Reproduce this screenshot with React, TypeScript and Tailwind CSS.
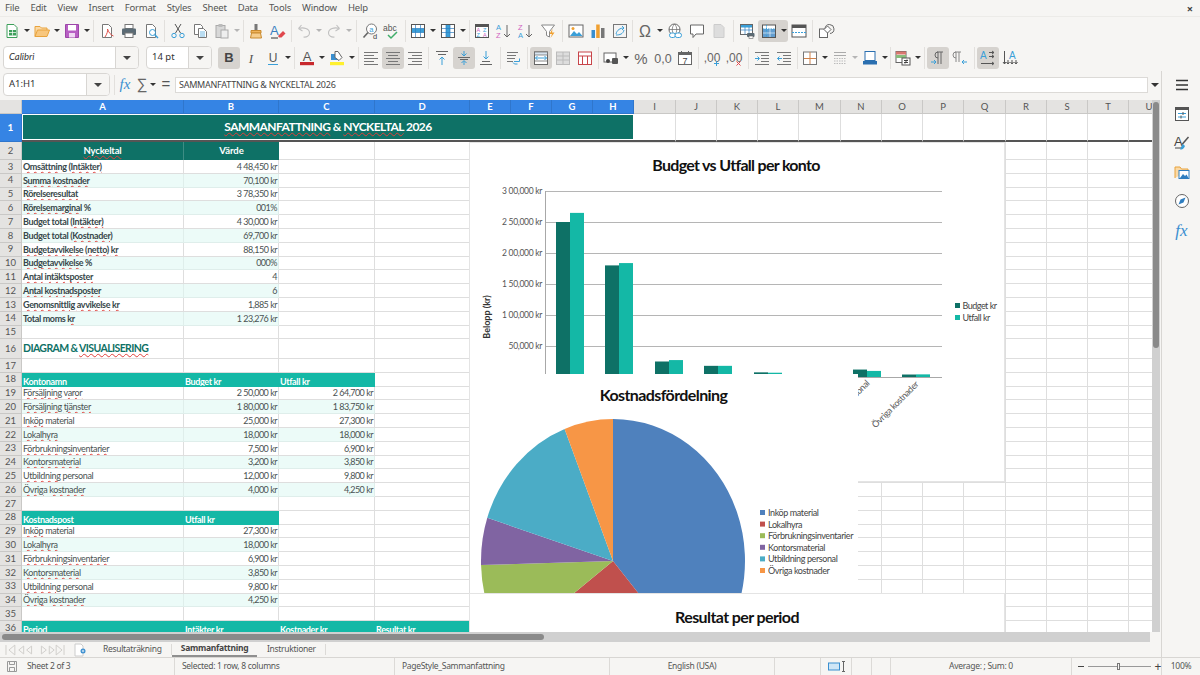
import type { ReactNode } from "react";

const COLS =
  "grid grid-cols-[22px_162px_95px_96px_95px_41px_41px_41px_41px_42px_41px_41px_41px_42px_41px_41px_41px_42px_41px_41px_41px_41px]";
const OK = ["Total", "total", "moms", "Budget", "Period", "material", "personal", "%", "&", "2026", "DIAGRAM", "Värde"];
const BLUE = "#3a9fd8";

function Sp({ text }: { text: string }) {
  return (
    <>
      {text.split(" ").map((w, i) => (
        <span key={i}>
          {i > 0 && " "}
          {OK.includes(w) ? w : <span className="underline decoration-wavy decoration-[#e0403a] decoration-1 underline-offset-1">{w}</span>}
        </span>
      ))}
    </>
  );
}

function Ico({ children }: { children: ReactNode }) {
  return (
    <svg viewBox="0 0 16 16" fill="none" className="w-4 h-4 overflow-visible [font-family:'Liberation_Sans',sans-serif]">
      {children}
    </svg>
  );
}

function B({ children, active }: { children: ReactNode; active?: boolean }) {
  return (
    <div className={`w-[22px] h-[22px] shrink-0 flex items-center justify-center rounded-[3px] ${active ? "bg-[#d6d3cf]" : ""}`}>
      <Ico>{children}</Ico>
    </div>
  );
}

function D({ off }: { off?: boolean }) {
  return (
    <div className="w-[8px] h-[22px] shrink-0 flex items-center justify-center">
      <svg viewBox="0 0 6 3" className="w-[6px] h-[3px]">
        <path d="M0 0h6L3 3z" fill={off ? "#b5b5b5" : "#333"} />
      </svg>
    </div>
  );
}

function Sep({ w }: { w: string }) {
  return (
    <div className={`${w} h-[22px] shrink-0 flex justify-center`}>
      <div className="w-px h-full bg-[#e2e0dd]" />
    </div>
  );
}

function Combo({ w, split, italic, text }: { w: string; split: string; italic?: boolean; text: string }) {
  return (
    <div className={`${w} h-[23px] shrink-0 flex bg-white border border-[#d8d6d3] rounded-[4px] overflow-hidden`}>
      <div className={`flex-1 flex items-center pl-[5px] text-[9.5px] text-[#333] ${italic ? "italic [font-family:Lato,sans-serif]" : ""}`}>{text}</div>
      <div className={`${split} flex items-center justify-center bg-[#f6f5f3] border-l border-[#d8d6d3]`}>
        <svg viewBox="0 0 8 4" className="w-[8px] h-[4px]">
          <path d="M0 0h8L4 4z" fill="#444" />
        </svg>
      </div>
    </div>
  );
}

const doc = "M3.5 1.5h6l3 3v10h-9z";
const L = ({ d, c = "#666" }: { d: string; c?: string }) => <path d={d} stroke={c} strokeWidth="1" />;

function Toolbar1() {
  return (
    <div className="h-[27px] flex items-center pl-[1px]">
      <B>
        <path d="M3 1.5h7l3 3v10H3z" fill="#fff" stroke="#3c9f5a" />
        <rect x="5" y="7" width="7" height="5.5" fill="#3c9f5a" />
        <path d="M5 9.5h7M8.5 7v5.5" stroke="#fff" strokeWidth=".7" />
      </B>
      <D />
      <B>
        <path d="M1 13.5v-10h5L7.5 5H13v2" fill="#fbd9a5" stroke="#e8a33c" />
        <path d="M1 13.5L3.5 7h12L13 13.5z" fill="#f8c77e" stroke="#e8a33c" />
      </B>
      <D />
      <B>
        <path d="M1.5 1.5h13v13h-13z" fill="#b85fc4" stroke="#9c46a8" />
        <rect x="4" y="2" width="8" height="5.5" fill="#fff" />
        <rect x="5" y="10" width="6" height="4.5" fill="#f0d9f3" />
      </B>
      <D />
      <Sep w="w-[5px]" />
      <B>
        <path d={doc} fill="#fff" stroke="#777" />
        <path d="M6 14c2-3 3-6 2.500-8 1 3 3 6 6 7" stroke="#e0514a" />
      </B>
      <B>
        <rect x="4" y="1.500" width="8" height="4" fill="#fff" stroke="#777" />
        <rect x="1" y="5.500" width="14" height="6.500" rx="1" fill="#5b6b75" />
        <rect x="4" y="10" width="8" height="4.500" fill="#fff" stroke="#777" />
      </B>
      <B>
        <path d={doc} fill="#fff" stroke="#777" />
        <circle cx="9.500" cy="9.500" r="3" stroke={BLUE} />
        <path d="M11.800 11.800L15 15" stroke={BLUE} strokeWidth="1.500" />
      </B>
      <Sep w="w-[5px]" />
      <B>
        <path d="M5 1L10.500 10M11 1L5.500 10" stroke="#555" />
        <circle cx="4" cy="12.500" r="2.200" stroke={BLUE} />
        <circle cx="12" cy="12.500" r="2.200" stroke={BLUE} />
      </B>
      <B>
        <path d="M2.500 1.500h6l2 2v8h-8z" fill="#fff" stroke="#777" />
        <path d="M6.500 5.500h5l3 3v6h-8z" fill="#fff" stroke="#777" />
        <path d="M8 9h5M8 11h5M8 13h5" stroke={BLUE} strokeWidth=".7" />
      </B>
      <B>
        <rect x="2" y="2.500" width="9" height="12" fill="#d8d8d8" stroke="#aaa" />
        <rect x="4.500" y="1" width="4" height="3" fill="#bbb" />
        <rect x="7" y="7" width="7" height="8" fill="#eee" stroke="#aaa" />
      </B>
      <D off />
      <Sep w="w-[4px]" />
      <B>
        <rect x="6.500" y="1" width="3" height="6" fill="#777" />
        <path d="M3 7.500h10V10H3z" fill="#f0b35a" stroke="#c98a2e" />
        <path d="M3.500 10h9l1 5h-11z" fill="#f6cd8c" stroke="#c98a2e" />
      </B>
      <B>
        <text x="0" y="12" fontSize="13" fill="#3a7fc0">A</text>
        <path d="M8 13l5-5 2.500 2.500-4 4H9z" fill="#e0484d" />
        <path d="M1 15h7" stroke="#333" />
      </B>
      <Sep w="w-[4px]" />
      <B>
        <path d="M2.500 5.500L5.500 2M2.500 5.500L6.500 8M2.500 5.500c5-1.500 11 0 11 4.500 0 3-3 4.500-6 4" stroke="#c0c0c0" strokeWidth="1.100" />
      </B>
      <D off />
      <B>
        <path d="M13.500 5.500L10.500 2M13.500 5.500L9.500 8M13.500 5.500c-5-1.500-11 0-11 4.500 0 3 3 4.500 6 4" stroke="#c0c0c0" strokeWidth="1.100" />
      </B>
      <D off />
      <Sep w="w-[6px]" />
      <B>
        <circle cx="9.500" cy="6" r="5" fill="#fff" stroke="#777" />
        <path d="M6 9.500l-4.500 5" stroke="#666" strokeWidth="1.600" />
        <text x="7.300" y="8.500" fontSize="7.500" fill={BLUE}>a</text>
        <text x="11" y="16" fontSize="7.500" fill="#444">d</text>
      </B>
      <B>
        <text x="-1" y="8" fontSize="8.500" fill="#555">abc</text>
        <path d="M4 12l3 3 6-6" stroke="#3fae6a" strokeWidth="1.500" />
      </B>
      <Sep w="w-[4px]" />
      <B>
        <rect x="1.500" y="1.500" width="13" height="13" fill="#fff" stroke="#555" />
        <rect x="2" y="5.500" width="12" height="4" fill={BLUE} />
        <path d="M2 5.500h12M2 9.500h12M5.500 2v12M10.500 2v12" stroke="#2f7ec0" strokeWidth=".7" />
      </B>
      <D />
      <B>
        <rect x="1.500" y="1.500" width="13" height="13" fill="#fff" stroke="#555" />
        <rect x="6" y="2" width="4" height="12" fill={BLUE} />
        <path d="M2 5.500h12M2 9.500h12M6 2v12M10 2v12" stroke="#2f7ec0" strokeWidth=".7" />
      </B>
      <D />
      <Sep w="w-[4px]" />
      <B>
        <rect x="1.500" y="1.500" width="13" height="13" fill="#fff" stroke="#555" />
        <rect x="1.500" y="1.500" width="13" height="2.500" fill="#555" />
        <text x="2.500" y="9" fontSize="5.500" fill="#c85fc0">A</text>
        <text x="2.500" y="14" fontSize="5.500" fill={BLUE}>Z</text>
        <text x="9" y="9" fontSize="5.500" fill={BLUE}>Z</text>
        <text x="9" y="14" fontSize="5.500" fill="#c85fc0">A</text>
      </B>
      <B>
        <text x="0" y="7" fontSize="7.500" fill={BLUE}>A</text>
        <text x="0" y="15" fontSize="7.500" fill="#d15fbf">Z</text>
        <path d="M11 2v12M8 11l3 3 3-3" stroke="#666" />
      </B>
      <B>
        <text x="0" y="7" fontSize="7.500" fill="#d15fbf">Z</text>
        <text x="0" y="15" fontSize="7.500" fill={BLUE}>A</text>
        <path d="M11 2v12M8 11l3 3 3-3" stroke="#666" />
      </B>
      <B>
        <path d="M1.500 2h13l-5 6.500V14l-3-1.500v-4z" fill="#fff" stroke="#888" />
        <path d="M12.500 6l-3 5H12l-1.500 4 4-5.500H12z" fill="#f0a030" />
      </B>
      <Sep w="w-[6px]" />
      <B>
        <rect x="1" y="2" width="14" height="12" fill="#fff" stroke="#666" />
        <circle cx="5" cy="5.500" r="1.500" fill="#f0a030" />
        <path d="M2 13l4-5 3 3 2-2 3.500 4z" fill={BLUE} />
      </B>
      <B>
        <rect x="1.500" y="7" width="3.500" height="8" fill="#3a8fd0" />
        <rect x="6.200" y="1.500" width="3.500" height="13.500" fill="#f0a030" />
        <rect x="11" y="5" width="3.500" height="10" fill="#777" />
      </B>
      <B>
        <rect x="1.500" y="1.500" width="13" height="13" fill="#f4f4f4" stroke="#777" />
        <path d="M4 11c1-4 4-6 8-6M10 3l2 2-2 2M4 12c4 0 7-1 8-5" stroke={BLUE} />
      </B>
      <Sep w="w-[3px]" />
      <B>
        <text x="8" y="14" textAnchor="middle" fontSize="16" fill="#666">Ω</text>
      </B>
      <D />
      <B>
        <circle cx="7.500" cy="6.500" r="5.500" fill="#fff" stroke="#666" />
        <path d="M2 6.500h11M7.500 1c-3 3-3 8 0 11M7.500 1c3 3 3 8 0 11" stroke="#666" strokeWidth=".7" />
        <rect x="2.500" y="10" width="6" height="4.500" rx="2.200" fill="#fff" stroke={BLUE} />
        <rect x="8" y="10" width="6.500" height="4.500" rx="2.200" fill="#fff" stroke={BLUE} />
      </B>
      <B>
        <path d="M1.500 2h13v9H7l-3 3.500V11H1.500z" fill="#fff" stroke="#666" />
      </B>
      <B>
        <path d="M3 1.500h7l3 3v10H3z" fill="#ddd" stroke="#ccc" />
      </B>
      <Sep w="w-[6px]" />
      <B>
        <rect x="1.500" y="1.500" width="12" height="10" fill="#fff" stroke="#666" />
        <rect x="2" y="2" width="11" height="2.500" fill={BLUE} />
        <path d="M1.500 7h12M6 4v7.500M10 4v7.500" stroke="#2f7ec0" strokeWidth=".7" />
        <rect x="8" y="10" width="7.500" height="4" rx="1" fill="#5b6b75" />
        <rect x="10" y="13" width="4" height="2.500" fill="#fff" stroke="#666" strokeWidth=".6" />
      </B>
      <div className="flex rounded-[3px] bg-[#d6d3cf]">
        <B>
          <rect x="1.500" y="2" width="13" height="12.500" fill="#fff" stroke="#555" />
          <rect x="2" y="6" width="12" height="8" fill="#2f7ec0" opacity=".75" />
          <path d="M2 6h12M5.500 2v12" stroke={BLUE} strokeDasharray="1.500 1" />
          <path d="M2 10h12M9 6v8" stroke="#fff" strokeWidth=".6" />
        </B>
        <D />
      </div>
      <B>
        <rect x="1" y="2" width="14" height="12" fill="#fff" stroke="#555" />
        <rect x="1" y="2" width="14" height="3" fill="#555" />
        <path d="M1 9.500h14" stroke={BLUE} strokeDasharray="2 1" />
      </B>
      <Sep w="w-[5px]" />
      <B>
        <rect x="1.500" y="6" width="8" height="8.500" fill="#fff" stroke="#666" />
        <path d="M7 5.500a4.500 4.500 0 1 1 5 5" stroke="#666" />
        <path d="M9.500 3L13 6.500 9.500 10 6 6.500z" fill="#fff" stroke="#666" />
      </B>
    </div>
  );
}

function Toolbar2() {
  return (
    <div className="h-[27px] flex items-center pl-[3px]">
      <Combo w="w-[136px]" split="w-[23px]" italic text="Calibri" />
      <div className="w-[7px] shrink-0" />
      <Combo w="w-[66px]" split="w-[23px]" text="14 pt" />
      <div className="w-[6px] shrink-0" />
      <div className="w-[22px] h-[22px] shrink-0 flex items-center justify-center rounded-[3px] bg-[#d6d3cf] font-bold text-[13px] text-[#444] [font-family:'Liberation_Sans',sans-serif]">B</div>
      <B><text x="8" y="13" textAnchor="middle" fontSize="13" fontStyle="italic" fill="#555" fontFamily="Liberation Serif">I</text></B>
      <B>
        <text x="8" y="11.500" textAnchor="middle" fontSize="12" fill="#555">U</text>
        <path d="M3 14.500h10" stroke={BLUE} />
      </B>
      <D />
      <Sep w="w-[4px]" />
      <B>
        <text x="8" y="11" textAnchor="middle" fontSize="13" fill="#555">A</text>
        <rect x="1" y="12" width="14" height="3.200" fill="#c8282d" />
      </B>
      <D />
      <B>
        <path d="M2 4h7v6H2z" fill="#3a8fd0" />
        <path d="M6 1.500h3l4 6-3 3-4-3z" fill="#fff" stroke="#666" />
        <rect x="1" y="12" width="14" height="3.200" fill="#fff02e" />
      </B>
      <D />
      <Sep w="w-[4px]" />
      <B><L d="M1 2.500h14M1 5.500h10M1 8.500h14M1 11.500h10M1 14.500h14" c="#777" /></B>
      <B active><L d="M1 2.500h14M3 5.500h10M1 8.500h14M3 11.500h10M1 14.500h14" c="#777" /></B>
      <B><L d="M1 2.500h14M5 5.500h10M1 8.500h14M5 11.500h10M1 14.500h14" c="#777" /></B>
      <Sep w="w-[5px]" />
      <B>
        <L d="M2 1.500h12M4 4.500h8" />
        <L d="M8 15V7M5.500 9.500L8 7l2.500 2.500" c={BLUE} />
      </B>
      <B active>
        <L d="M2 7.500h12M4 9.500h8" />
        <L d="M8 1v5M5.500 3.500L8 6l2.500-2.500M8 15v-4M5.500 13L8 10.500 10.500 13" c={BLUE} />
      </B>
      <B>
        <L d="M4 11.500h8M2 14.500h12" />
        <L d="M8 1v8M5.500 6.500L8 9l2.500-2.500" c={BLUE} />
      </B>
      <Sep w="w-[6px]" />
      <B>
        <L d="M1 2.500h11M1 5.500h9M1 8.500h8M1 11.500h6" c="#777" />
        <L d="M8 11.500h5.500v-3M11.500 14h-3L7 12.500" c={BLUE} />
      </B>
      <Sep w="w-[5px]" />
      <B active>
        <rect x="1.500" y="2" width="13" height="12.500" fill="#fff" stroke="#666" />
        <rect x="1.500" y="2" width="13" height="3" fill="#d8e4ef" stroke="#666" strokeWidth=".7" />
        <L d="M2 11h12" c="#888" />
        <L d="M2.500 8h11M4.500 6l-2 2 2 2M11.500 6l2 2-2 2" c={BLUE} />
      </B>
      <B>
        <rect x="1.500" y="2" width="13" height="12.500" fill="#ddd" stroke="#bbb" />
        <L d="M2 6h12M2 10h12M8 2v12" c="#bbb" />
      </B>
      <B>
        <rect x="1.500" y="2" width="13" height="12.500" fill="#fff" stroke="#c8454a" />
        <L d="M2 6h12M5.500 6v8M10.500 6v8" c="#c8454a" />
      </B>
      <Sep w="w-[4px]" />
      <B>
        <rect x="1" y="3" width="12" height="9" fill="#fff" stroke="#666" />
        <circle cx="5" cy="11" r="2" fill="#444" />
        <rect x="9" y="8" width="6" height="6" rx="1" fill="#555" />
      </B>
      <D />
      <B><text x="8" y="13.500" textAnchor="middle" fontSize="15" fill="#666">%</text></B>
      <B><text x="8" y="13" textAnchor="middle" fontSize="12.500" fill="#666">0,0</text></B>
      <B>
        <rect x="1.500" y="2.500" width="13" height="12" fill="#fff" stroke="#666" />
        <rect x="1.500" y="2.500" width="13" height="2.500" fill="#666" />
        <L d="M4.500 1v2M11.500 1v2" c="#666" />
        <text x="8" y="13.500" textAnchor="middle" fontSize="9" fill="#444">7</text>
      </B>
      <Sep w="w-[5px]" />
      <B>
        <text x="8" y="12" textAnchor="middle" fontSize="12" fill="#666">,00</text>
        <L d="M12.500 11v5M10 13.500h5" c={BLUE} />
      </B>
      <B>
        <text x="8" y="12" textAnchor="middle" fontSize="12" fill="#666">,00</text>
        <L d="M10.500 11.500l4 4M14.500 11.500l-4 4" c="#e0484d" />
      </B>
      <Sep w="w-[6px]" />
      <B>
        <L d="M1 2.500h14M7 5.500h8M7 8.500h8M7 11.500h8M1 14.500h14" c="#777" />
        <L d="M1 8.500h4M3.500 6.500l2 2-2 2" c={BLUE} />
      </B>
      <B>
        <L d="M1 2.500h14M7 5.500h8M7 8.500h8M7 11.500h8M1 14.500h14" c="#777" />
        <L d="M6 8.500H1.500M3.500 6.500l-2 2 2 2" c={BLUE} />
      </B>
      <Sep w="w-[4px]" />
      <B>
        <rect x="1.500" y="2" width="13" height="12.500" fill="#fff" stroke="#777" />
        <L d="M2 8.500h12M8 2v12" c="#d0824a" />
      </B>
      <D />
      <B><L d="M2 2.500h12M2 5.500h12" c="#aaa" /><path d="M2 8.500h12M2 11h12M2 13.500h12" stroke="#bbb" strokeDasharray="1.500 1" /></B>
      <D off />
      <B>
        <rect x="3" y="1.500" width="10" height="9" fill="#fff" stroke="#2a6fb0" />
        <rect x="1" y="11" width="14" height="3.500" fill="#2a6fb0" />
      </B>
      <D />
      <Sep w="w-[3px]" />
      <B>
        <rect x="1" y="1.500" width="10" height="11" fill="#fff" stroke="#666" />
        <rect x="1" y="1.500" width="10" height="3" fill="#d9776f" />
        <rect x="1" y="5" width="10" height="3" fill="#88bd7c" />
        <rect x="7" y="8" width="8" height="7" fill="#fff" stroke="#555" />
        <L d="M9 10.500h4M9 12.500h4M12 9.500l-2 4" c="#444" />
      </B>
      <D />
      <Sep w="w-[5px]" />
      <B active>
        <path d="M7 2h6M8 2v12M11 2v12M8 2a3 3 0 0 0 0 6" stroke="#666" />
        <L d="M1 12h5M4 10l2 2-2 2" c={BLUE} />
      </B>
      <B>
        <path d="M3 2h6M4 2v10M7 2v10M4 2a3 3 0 0 0 0 6" stroke="#888" />
        <L d="M15 12h-5M12 10l-2 2 2 2" c={BLUE} />
      </B>
      <Sep w="w-[6px]" />
      <B active>
        <text x="0" y="9" fontSize="10" fill={BLUE}>A</text>
        <L d="M9 2.500h5M12 1l2 1.500L12 4M9 6.500h5M12 5l2 1.500L12 8M1 13.500h13M12 12l2 1.500-2 1.500" c="#555" />
      </B>
      <B>
        <text x="7" y="9" fontSize="10" fill={BLUE}>A</text>
        <L d="M2.500 1v13M1 12l1.500 2L4 12M6 10v4M4.500 12l1.500 2 1.500-2M10 10v4M8.500 12l1.500 2 1.500-2M14 10v4M12.500 12l1.500 2 1.500-2" c="#555" />
      </B>
    </div>
  );
}

function FormulaBar() {
  return (
    <div className="h-[29px] flex items-center pl-[3px] pb-[2px]">
      <Combo w="w-[107px]" split="w-[23px]" text="A1:H1" />
      <div className="w-[4px] shrink-0" />
      <div className="w-px h-[20px] bg-[#e2e0dd]" />
      <div className="w-[20px] shrink-0 text-center text-[15px] italic text-[#3a8fd0] [font-family:'Liberation_Serif',serif]">fx</div>
      <div className="w-[14px] shrink-0 text-center text-[15px] text-[#666] [font-family:'Liberation_Sans',sans-serif]">∑</div>
      <D />
      <div className="w-[18px] shrink-0 text-center text-[15px] text-[#555] [font-family:'Liberation_Sans',sans-serif]">=</div>
      <div className="w-[973px] h-[16px] shrink-0 flex items-center pl-[3px] bg-white border border-[#dcdad7] text-[9px] tracking-[-0.25px] text-[#444] leading-none whitespace-nowrap">
        SAMMANFATTNING &amp; NYCKELTAL 2026
      </div>
      <div className="flex-1 flex justify-center">
        <svg viewBox="0 0 8 4" className="w-[8px] h-[4px]">
          <path d="M0 0h8L4 4z" fill="#333" />
        </svg>
      </div>
    </div>
  );
}

const tone: Record<string, string> = {
  plain: "bg-white text-[#4a5252] border-[#dedede]",
  tint: "bg-[#ecfbf8] text-[#4a5252] border-[#dfeeeb]",
  head: "bg-[#14b8a6] text-white font-bold border-[#14b8a6] items-end",
};

function C({ t = "", k = "plain", right, bold }: { t?: string; k?: string; right?: boolean; bold?: boolean }) {
  return (
    <div
      className={`flex items-center overflow-hidden whitespace-nowrap leading-none px-[1px] text-[9px] border-r border-b ${tone[k]} ${right ? "justify-end tracking-[-0.5px]" : "tracking-[-0.35px]"} ${bold ? "font-bold text-[#37474a]" : ""}`}
    >
      <span>{right ? t : <Sp text={t} />}</span>
    </div>
  );
}

function Row({ n, used = 0, h = "h-[13.8px]", children }: { n: number; used?: number; h?: string; children?: ReactNode }) {
  return (
    <div className={`${COLS} ${h}`}>
      <div className="flex items-center justify-center bg-[#e4e3e1] border-r border-b border-[#c9c8c6] text-[9.5px] text-[#555] leading-none">{n}</div>
      {children}
      {Array.from({ length: 21 - used }, (_, i) => (
        <div key={i} className="bg-white border-r border-b border-[#dedede]" />
      ))}
    </div>
  );
}

const kpi = [
  ["Omsättning (Intäkter)", "4 48,450 kr"],
  ["Summa kostnader", "70,100 kr"],
  ["Rörelseresultat", "3 78,350 kr"],
  ["Rörelsemarginal %", "001%"],
  ["Budget total (Intäkter)", "4 30,000 kr"],
  ["Budget total (Kostnader)", "69,700 kr"],
  ["Budgetavvikelse (netto) kr", "88,150 kr"],
  ["Budgetavvikelse %", "000%"],
  ["Antal intäktsposter", "4"],
  ["Antal kostnadsposter", "6"],
  ["Genomsnittlig avvikelse kr", "1,885 kr"],
  ["Total moms kr", "1 23,276 kr"],
];

const konto = [
  ["Försäljning varor", "2 50,000 kr", "2 64,700 kr"],
  ["Försäljning tjänster", "1 80,000 kr", "1 83,750 kr"],
  ["Inköp material", "25,000 kr", "27,300 kr"],
  ["Lokalhyra", "18,000 kr", "18,000 kr"],
  ["Förbrukningsinventarier", "7,500 kr", "6,900 kr"],
  ["Kontorsmaterial", "3,200 kr", "3,850 kr"],
  ["Utbildning personal", "12,000 kr", "9,800 kr"],
  ["Övriga kostnader", "4,000 kr", "4,250 kr"],
];

const bars = [
  [556, 250000, 264700],
  [605, 180000, 183750],
  [655, 25000, 27300],
  [704, 18000, 18000],
  [754, 7500, 6900],
  [803, 3200, 3850],
  [853, 12000, 9800],
  [902, 4000, 4250],
];

const yLabels = ["3 00,000 kr", "2 50,000 kr", "2 00,000 kr", "1 50,000 kr", "1 00,000 kr", "50,000 kr"];

function BarChart() {
  return (
    <svg viewBox="470 143 534 338" className="absolute left-[470px] top-[43px] w-[534px] h-[338px] bg-white outline outline-1 outline-[#e4e4e4] [font-family:Lato,sans-serif]">
      <text x="736" y="171" textAnchor="middle" fontSize="16" fontWeight="700" letterSpacing="-0.7" fill="#111">Budget vs Utfall per konto</text>
      {yLabels.map((l, i) => (
        <g key={l}>
          <path d={`M545.500 ${191.500 + i * 31}H942`} stroke="#b5b5b5" />
          <text x="542" y={194 + i * 31} textAnchor="end" fontSize="8.500" letterSpacing="-0.3" fill="#555">{l}</text>
        </g>
      ))}
      <path d="M545.500 191V377.500H942" fill="none" stroke="#a8a8a8" />
      {bars.map(([x, a, b]) => (
        <g key={x}>
          <rect x={x} y={377 - a / 1612.900} width="14" height={a / 1612.900} fill="#0e7166" />
          <rect x={x + 14} y={377 - b / 1612.900} width="14" height={b / 1612.900} fill="#14b8a6" />
        </g>
      ))}
      <text transform="translate(490 317) rotate(-90)" textAnchor="middle" fontSize="9" fontWeight="700" fill="#333">Belopp (kr)</text>
      <rect x="955" y="303" width="5" height="5" fill="#0e7166" />
      <text x="962.500" y="309" fontSize="9" letterSpacing="-0.5" fill="#444">Budget kr</text>
      <rect x="955" y="315" width="5" height="5" fill="#14b8a6" />
      <text x="962.500" y="320.500" fontSize="9" letterSpacing="-0.5" fill="#444">Utfall kr</text>
      <text transform="translate(870 384) rotate(-45)" textAnchor="end" fontSize="9" letterSpacing="-0.4" fill="#555">Utbildning personal</text>
      <text transform="translate(919 385) rotate(-45)" textAnchor="end" fontSize="9" letterSpacing="-0.4" fill="#555">Övriga kostnader</text>
    </svg>
  );
}

const pieLegend = [
  ["#4f81bd", "Inköp material"],
  ["#c0504d", "Lokalhyra"],
  ["#9bbb59", "Förbrukningsinventarier"],
  ["#8064a2", "Kontorsmaterial"],
  ["#4bacc6", "Utbildning personal"],
  ["#f79646", "Övriga kostnader"],
];

// slice edges as directions from the pie centre, the pie is drawn a bit taller than wide
const edges = [
  [0, -1],
  [26, 33],
  [-40, 33],
  [-131, 4],
  [-125, -43],
  [-48, -131],
  [0, -1],
];
const colors = ["#4f81bd", "#c0504d", "#9bbb59", "#8064a2", "#4bacc6", "#f79646"];

function onPie([dx, dy]: number[]) {
  const t = 1 / Math.hypot(dx / 132, dy / 142);
  return `${613 + dx * t} ${561 + dy * t}`;
}

function PieChart() {
  return (
    <svg viewBox="470 374 388 220" className="absolute left-[470px] top-[274px] w-[388px] h-[220px] bg-white [font-family:Lato,sans-serif]">
      <text x="663.500" y="401" textAnchor="middle" fontSize="16" fontWeight="700" letterSpacing="-0.6" fill="#111">Kostnadsfördelning</text>
      {colors.map((c, i) => (
        <path key={c} d={`M613 561L${onPie(edges[i])}A132 142 0 0 1 ${onPie(edges[i + 1])}Z`} fill={c} />
      ))}
      {pieLegend.map(([c, l], i) => (
        <g key={l}>
          <rect x="760" y={510 + i * 11.600} width="5" height="5" fill={c} />
          <text x="768" y={516 + i * 11.600} fontSize="9" letterSpacing="-0.4" fill="#444">{l}</text>
        </g>
      ))}
    </svg>
  );
}

function Sheet() {
  const letters = "ABCDEFGHIJKLMNOPQRSTU".split("");
  return (
    <div className="w-[1152px] relative overflow-hidden [font-family:Lato,sans-serif]">
      <div className={`${COLS} h-[14px]`}>
        <div className="bg-[#e4e3e1] border-r border-b border-[#c9c8c6]" />
        {letters.map((l, i) => (
          <div
            key={l}
            className={`flex items-center justify-center text-[9.5px] leading-none border-r border-b ${i < 8 ? "bg-[#3584e4] border-[#2f76cc] text-white font-bold" : "bg-[#e4e3e1] border-[#c9c8c6] text-[#555]"}`}
          >
            {l}
          </div>
        ))}
      </div>
      <div className={`${COLS} h-[28px]`}>
        <div className="flex items-center justify-center bg-[#3584e4] text-white font-bold text-[10px] border-r border-b border-[#2f76cc]">1</div>
        <div className="col-span-8 border-b-2 border-[#555]">
          <div className="h-full flex items-center justify-center bg-[#0e7166] border border-white text-white font-bold text-[12px] tracking-[-0.55px]">
            <span><Sp text="SAMMANFATTNING & NYCKELTAL 2026" /></span>
          </div>
        </div>
        {Array.from({ length: 13 }, (_, i) => (
          <div key={i} className="bg-white border-r border-r-[#dedede] border-b-2 border-b-[#555]" />
        ))}
      </div>
      <Row n={2} used={2} h="h-[18px]">
        <div className="flex items-center justify-center bg-[#0e7166] border-r border-[#3e8d84] text-white font-bold text-[9.5px] tracking-[-0.2px]"><span><Sp text="Nyckeltal" /></span></div>
        <div className="flex items-center justify-center bg-[#0e7166] text-white font-bold text-[9.5px]">Värde</div>
      </Row>
      {kpi.map(([a, b], i) => (
        <Row key={a} n={i + 3} used={2}>
          <C t={a} k={i % 2 ? "tint" : "plain"} bold />
          <C t={b} k={i % 2 ? "tint" : "plain"} right />
        </Row>
      ))}
      <Row n={15} />
      <Row n={16} used={1} h="h-[19.6px]">
        <div className="flex items-center px-[1px] bg-white border-r border-b border-[#dedede] text-[10.5px] tracking-[-0.6px] font-bold text-[#0e7166] whitespace-nowrap leading-none">
          <span><Sp text="DIAGRAM & VISUALISERING" /></span>
        </div>
      </Row>
      <Row n={17} />
      <Row n={18} used={3}>
        <C t="Kontonamn" k="head" />
        <C t="Budget kr" k="head" />
        <C t="Utfall kr" k="head" />
      </Row>
      {konto.map(([a, b, c], i) => (
        <Row key={a} n={i + 19} used={3}>
          <C t={a} k={i % 2 ? "tint" : "plain"} />
          <C t={b} k={i % 2 ? "tint" : "plain"} right />
          <C t={c} k={i % 2 ? "tint" : "plain"} right />
        </Row>
      ))}
      <Row n={27} />
      <Row n={28} used={2}>
        <C t="Kostnadspost" k="head" />
        <C t="Utfall kr" k="head" />
      </Row>
      {konto.slice(2).map(([a, , c], i) => (
        <Row key={a} n={i + 29} used={2}>
          <C t={a} k={i % 2 ? "tint" : "plain"} />
          <C t={c} k={i % 2 ? "tint" : "plain"} right />
        </Row>
      ))}
      <Row n={35} />
      <Row n={36} used={4}>
        <C t="Period" k="head" />
        <C t="Intäkter kr" k="head" />
        <C t="Kostnader kr" k="head" />
        <C t="Resultat kr" k="head" />
      </Row>
      <BarChart />
      <PieChart />
      <div className="absolute left-[470px] top-[494px] w-[534px] h-[60px] bg-white flex justify-center pt-[15px] text-[16px] tracking-[-0.6px] font-bold leading-none text-[#111] outline outline-1 outline-[#e4e4e4]">
        Resultat per period
      </div>
    </div>
  );
}

function TabBar() {
  return (
    <div className="h-[15px] flex items-center text-[8.5px] tracking-[-0.3px] text-[#555] leading-none whitespace-nowrap">
      <svg viewBox="0 0 62 12" className="ml-[5px] w-[61px] h-[12px]" fill="none" stroke="#d0cecb">
        <path d="M1 1v10M10 1L4 6l6 5zM14 6l5-4v8zM22 6l5-4v8zM37 2l5 4-5 4zM45 2l5 4-5 4zM52 1l6 5-6 5zM60 1v10" />
      </svg>
      <svg viewBox="0 0 12 14" className="ml-[8px] w-[12px] h-[14px]" fill="none">
        <path d="M1 1h6l2 2v10H1z" fill="#fff" stroke="#ccc" />
        <circle cx="9" cy="8" r="2.500" fill="#3a8fd0" />
        <path d="M7.800 8h2.400M9 6.800v2.400" stroke="#fff" strokeWidth=".7" />
      </svg>
      <div className="w-[17px] shrink-0" />
      <div className="w-[69px] h-[11px] shrink-0 flex items-center border-r border-[#dcdad7]">Resultaträkning</div>
      <div className="w-[85px] h-[15px] shrink-0 flex items-center justify-center font-bold text-[#444] border-b-2 border-[#8f8f8f]">Sammanfattning</div>
      <div className="w-[69px] h-[11px] shrink-0 pl-[10px] flex items-center border-r border-[#dcdad7]">Instruktioner</div>
    </div>
  );
}

function SideBar() {
  return (
    <div className="w-[39px] shrink-0 border-l border-[#d8d6d3] flex flex-col items-center gap-[13px] pt-[6px] pl-[1px]">
      <Ico>
        <path d="M2 3.500h12M2 8h12M2 12.500h12" stroke="#333" strokeWidth="1.300" />
      </Ico>
      <Ico>
        <rect x="1.500" y="1.500" width="13" height="13" fill="#fff" stroke="#555" />
        <rect x="1.500" y="1.500" width="13" height="2.500" fill="#555" />
        <path d="M4 7.500h8M4 11h8" stroke={BLUE} />
        <path d="M9 6v3M7 9.500v3" stroke="#555" />
      </Ico>
      <Ico>
        <text x="0" y="11" fontSize="13" fill="#444">A</text>
        <path d="M1 13h8" stroke="#444" />
        <path d="M14.500 2L8 9.500" stroke="#555" strokeWidth="1.500" />
        <path d="M9 9l2 2c-1 3-3 3.500-5 3.500 1-1 1-4 3-5.500z" fill={BLUE} />
      </Ico>
      <Ico>
        <path d="M1 14V3h5l1.500 2H14v2" fill="#fbd9a5" stroke="#e8a33c" />
        <rect x="5" y="6.500" width="10" height="8" fill="#fff" stroke="#2f7ec0" />
        <path d="M6 14l3-4 2 2 1.500-1.500 2 3.500z" fill="#2f7ec0" />
      </Ico>
      <Ico>
        <circle cx="8" cy="8" r="6.500" fill="#fff" stroke="#666" />
        <path d="M11.500 4.500l-2 5-5 2 2-5z" fill="#2f7ec0" />
      </Ico>
      <div className="w-4 h-4 flex items-center justify-center text-[17px] leading-none italic text-[#3a8fd0] [font-family:'Liberation_Serif',serif]">fx</div>
    </div>
  );
}

function StatusBar() {
  const cell = "h-full flex items-center border-r border-[#dcdad7] shrink-0";
  return (
    <div className="h-[18px] flex border-t border-[#d8d6d3] text-[8.5px] tracking-[-0.3px] text-[#555] leading-none whitespace-nowrap">
      <div className={`${cell} w-[175px] pl-[7px] gap-[10px]`}>
        <svg viewBox="0 0 10 11" className="w-[10px] h-[11px]" fill="none" stroke="#999">
          <path d="M.5.500h9v10h-9zM2.500.500v3h5v-3M2.500 10.500v-4h5v4" />
        </svg>
        Sheet 2 of 3
      </div>
      <div className={`${cell} w-[220px] pl-[7px]`}>Selected: 1 row, 8 columns</div>
      <div className={`${cell} w-[215px] pl-[7px]`}>PageStyle_Sammanfattning</div>
      <div className={`${cell} w-[165px] justify-center`}>English (USA)</div>
      <div className={`${cell} w-[46px]`} />
      <div className={`${cell} w-[31px] pl-[7px]`}>
        <svg viewBox="0 0 18 11" className="w-[18px] h-[11px]" fill="none">
          <rect x=".500" y="2" width="11" height="7" fill="#cfe6f6" stroke="#3a8fd0" />
          <path d="M14 .500h3M15.500 .500v10M14 10.500h3" stroke="#666" />
        </svg>
      </div>
      <div className={`${cell} w-[20px]`} />
      <div className={`${cell} w-[19px]`} />
      <div className={`${cell} w-[181px] justify-center`}>Average: ; Sum: 0</div>
      <div className={`${cell} w-[90px] pl-[6px] gap-[3px]`}>
        <span className="w-[6px] h-px bg-[#444]" />
        <div className="relative w-[65px] h-px bg-[#999] ml-[1px]">
          <div className="absolute left-[29px] -top-[3px] w-[3px] h-[7px] bg-[#f6f5f3] border border-[#777]" />
        </div>
        <span className="text-[12px] text-[#444]">+</span>
      </div>
      <div className="flex-1 flex items-center justify-center">100%</div>
    </div>
  );
}

export default function App() {
  return (
    <div className="w-[1200px] h-[675px] flex flex-col overflow-hidden bg-[#f6f5f3] [font-family:'Noto_Sans',sans-serif] text-[#444]">
      <div className="h-[17px] shrink-0 flex items-center justify-between pl-[5px] pr-[7px] border-b border-[#ecebe8]">
        <div className="flex gap-[11px] text-[9.5px] tracking-[-0.2px] leading-none text-[#555]">
          {["File", "Edit", "View", "Insert", "Format", "Styles", "Sheet", "Data", "Tools", "Window", "Help"].map((m) => (
            <span key={m}>{m}</span>
          ))}
        </div>
        <span className="text-[11px] font-bold leading-none text-[#444]">×</span>
      </div>
      <Toolbar1 />
      <Toolbar2 />
      <div className="flex flex-1 min-h-0">
        <div className="w-[1161px] shrink-0 flex flex-col">
          <FormulaBar />
          <div className="flex flex-1 min-h-0">
            <Sheet />
            <div className="w-[8px] bg-[#d0d0d0] pt-[2px] px-[1px]">
              <div className="h-[246px] rounded-full bg-[#8a8a8a]" />
            </div>
          </div>
          <div className="h-[10px] shrink-0 flex items-center bg-[#d0d0d0] mr-[11px] pl-[2px]">
            <div className="w-[542px] h-[6px] rounded-full bg-[#8a8a8a]" />
          </div>
          <TabBar />
        </div>
        <SideBar />
      </div>
      <StatusBar />
    </div>
  );
}
